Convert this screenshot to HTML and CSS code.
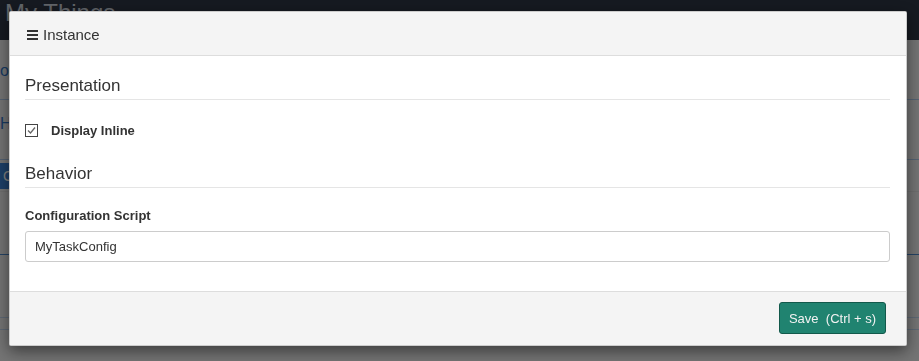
FILE: index.html
```html
<!DOCTYPE html>
<html>
<head>
<meta charset="utf-8">
<title>Instance</title>
<link rel="stylesheet" href="styles.css">
</head>
<body>
<div class="page">
  <nav class="navbar">
    <span class="brand">My Things</span>
    <span class="nav-link active">Editor</span>
    <span class="nav-link">Preview</span>
  </nav>
  <div class="content">
    <div class="row row-a"><span class="link">ol</span></div>
    <div class="row row-b"><span class="link">H</span></div>
    <div class="row row-c"><span class="chip">C</span></div>
    <div class="row row-d"></div>
    <div class="row row-e"></div>
    <div class="row row-f"></div>
  </div>
</div>
<div class="overlay"></div>
<div class="modal">
  <header class="modal-header">
    <svg class="menu-icon" width="11" height="10" viewBox="0 0 11 10"><rect x="0" y="0" width="11" height="2" fill="#333"/><rect x="0" y="4" width="11" height="2" fill="#333"/><rect x="0" y="8" width="11" height="2" fill="#333"/></svg>
    <span class="modal-title">Instance</span>
  </header>
  <div class="modal-body">
    <h4 class="section-title first">Presentation</h4>
    <label class="check-row">
      <svg class="check" width="13" height="13" viewBox="0 0 13 13"><rect x="0.5" y="0.5" width="12" height="12" fill="#fff" stroke="#444"/><polyline points="3,6.5 5.5,9 10,3.5" fill="none" stroke="#666" stroke-width="1.3"/></svg>
      <span class="check-label">Display Inline</span>
    </label>
    <h4 class="section-title">Behavior</h4>
    <div class="field-label">Configuration Script</div>
    <div class="text-input">MyTaskConfig</div>
  </div>
  <footer class="modal-footer">
    <button class="btn-save">Save&nbsp; (Ctrl + s)</button>
  </footer>
</div>
</body>
</html>
```

FILE: styles.css
```css
* { box-sizing: border-box; }
html, body { margin: 0; padding: 0; }
body {
  width: 919px;
  height: 361px;
  overflow: hidden;
  font-family: "Liberation Sans", Arial, sans-serif;
  color: #333;
  background: #e8e8e8;
}
.page { width: 919px; height: 361px; }
.navbar {
  height: 40px;
  background: #2c3442;
  display: flex;
  align-items: flex-start;
}
.brand {
  font-size: 24px;
  color: #c4cad4;
  margin-left: 5px;
  margin-top: 0px;
  line-height: 26px;
  width: 340px;
}
.nav-link {
  font-size: 14px;
  line-height: 14px;
  margin-top: 10px;
  margin-right: 22px;
  color: #9aa3b0;
}
.nav-link.active { color: #3f86d6; }
.content { width: 919px; }
.row { width: 919px; border-bottom: 1px solid #a9c4e4; }
.row-a { height: 60px; padding-top: 22px; }
.row-b { height: 60px; padding-top: 15px; }
.row-c { height: 32px; padding-top: 3px; border-bottom-color: #dcdcdc; }
.row-d { height: 63px; border-bottom-color: #4a86c8; }
.row-e { height: 63px; border-bottom-color: #bcd0e8; }
.row-f { height: 12px; border-bottom-color: #bcd0e8; }
.link { color: #3173c2; font-size: 16px; line-height: 16px; }
.chip {
  display: inline-block;
  width: 30px;
  height: 26px;
  line-height: 26px;
  padding-left: 8px;
  margin-left: -5px;
  background: #3a7fd0;
  color: #fff;
  font-size: 14px;
}
.overlay {
  position: fixed;
  inset: 0;
  background: rgba(0, 0, 0, 0.5);
}
.modal {
  position: fixed;
  left: 9px;
  top: 11px;
  width: 898px;
  height: 335px;
  background: #fff;
  border: 1px solid rgba(0, 0, 0, 0.2);
  border-radius: 2px;
  box-shadow: 0 5px 15px rgba(0, 0, 0, 0.5);
  display: flex;
  flex-direction: column;
}
.modal-header {
  height: 44px;
  flex: none;
  background: #f4f4f4;
  border-bottom: 1px solid #dddddd;
  display: flex;
  align-items: center;
  padding: 2px 17px 0 17px;
  gap: 5px;
}
.menu-icon { display: block; margin-top: 1px; }
.modal-title { font-size: 15px; color: #333; }
.modal-body {
  padding: 0 16px 29px 15px;
  flex: none;
}
.section-title {
  margin: 24px 0 0 0;
  font-size: 17px;
  line-height: 20px;
  font-weight: normal;
  color: #333;
  padding-bottom: 3px;
  border-bottom: 1px solid #e5e5e5;
}
.section-title.first { margin-top: 20px; }
.check-row {
  display: flex;
  align-items: center;
  height: 20px;
  margin-top: 20px;
  gap: 13px;
}
.check { display: block; }
.check-label { font-size: 13px; font-weight: bold; color: #333; }
.field-label {
  margin-top: 19px;
  font-size: 13px;
  line-height: 18px;
  font-weight: bold;
  color: #333;
}
.text-input {
  margin-top: 6px;
  height: 31px;
  border: 1px solid #cccccc;
  border-radius: 3px;
  padding: 0 9px;
  display: flex;
  align-items: center;
  font-size: 13px;
  color: #333;
}
.modal-footer {
  flex: 1;
  background: #f4f4f4;
  border-top: 1px solid #dddddd;
  display: flex;
  justify-content: flex-end;
  align-items: flex-start;
  padding: 10px 20px 0 0;
}
.btn-save {
  height: 32px;
  padding: 0 9px;
  background: #208370;
  border: 1px solid #12594b;
  border-radius: 3px;
  color: #f2f2f2;
  font-family: "Liberation Sans", Arial, sans-serif;
  font-size: 13px;
}
```
